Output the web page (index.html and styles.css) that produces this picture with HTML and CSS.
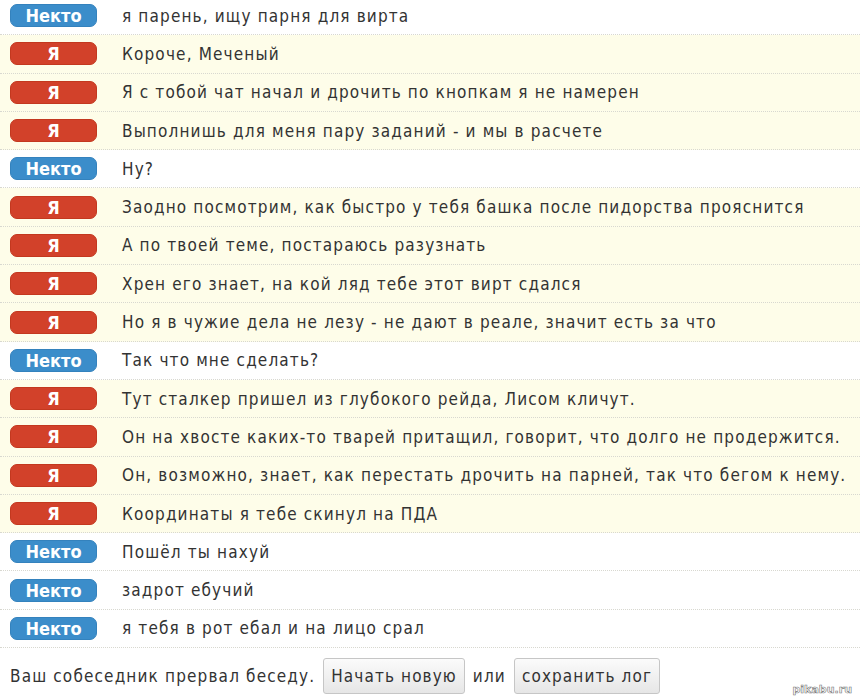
FILE: index.html
```html
<!DOCTYPE html>
<html lang="ru">
<head>
<meta charset="utf-8">
<link rel="stylesheet" href="styles.css">
</head>
<body>
<div class="chat">
  <div class="row stranger"><span class="badge">Некто</span><span class="msg">я парень, ищу парня для вирта</span></div>
  <div class="row me"><span class="badge">Я</span><span class="msg">Короче, Меченый</span></div>
  <div class="row me"><span class="badge">Я</span><span class="msg">Я с тобой чат начал и дрочить по кнопкам я не намерен</span></div>
  <div class="row me"><span class="badge">Я</span><span class="msg">Выполнишь для меня пару заданий - и мы в расчете</span></div>
  <div class="row stranger"><span class="badge">Некто</span><span class="msg">Ну?</span></div>
  <div class="row me"><span class="badge">Я</span><span class="msg">Заодно посмотрим, как быстро у тебя башка после пидорства прояснится</span></div>
  <div class="row me"><span class="badge">Я</span><span class="msg">А по твоей теме, постараюсь разузнать</span></div>
  <div class="row me"><span class="badge">Я</span><span class="msg">Хрен его знает, на кой ляд тебе этот вирт сдался</span></div>
  <div class="row me"><span class="badge">Я</span><span class="msg">Но я в чужие дела не лезу - не дают в реале, значит есть за что</span></div>
  <div class="row stranger"><span class="badge">Некто</span><span class="msg">Так что мне сделать?</span></div>
  <div class="row me"><span class="badge">Я</span><span class="msg">Тут сталкер пришел из глубокого рейда, Лисом кличут.</span></div>
  <div class="row me"><span class="badge">Я</span><span class="msg">Он на хвосте каких-то тварей притащил, говорит, что долго не продержится.</span></div>
  <div class="row me"><span class="badge">Я</span><span class="msg">Он, возможно, знает, как перестать дрочить на парней, так что бегом к нему.</span></div>
  <div class="row me"><span class="badge">Я</span><span class="msg">Координаты я тебе скинул на ПДА</span></div>
  <div class="row stranger"><span class="badge">Некто</span><span class="msg">Пошёл ты нахуй</span></div>
  <div class="row stranger"><span class="badge">Некто</span><span class="msg">задрот ебучий</span></div>
  <div class="row stranger"><span class="badge">Некто</span><span class="msg">я тебя в рот ебал и на лицо срал</span></div>
</div>
<div class="footer">
  <span>Ваш собеседник прервал беседу.</span>
  <button class="btn">Начать новую</button>
  <span>или</span>
  <button class="btn">сохранить лог</button>
</div>
<div class="watermark">pikabu.ru</div>
</body>
</html>
```
FILE: styles.css
```css
html, body {
  margin: 0;
  padding: 0;
  background: #ffffff;
}
body {
  width: 860px;
  height: 699px;
  overflow: hidden;
  position: relative;
  font-family: "DejaVu Sans Condensed", "DejaVu Sans", sans-serif;
  font-size: 17px;
  letter-spacing: 1.15px;
  color: #333333;
}
.chat {
  margin-top: -3px;
}
.row {
  box-sizing: border-box;
  height: 38.3px;
  display: flex;
  align-items: center;
  border-bottom: 1px dotted #d8d8d0;
}
.row.me {
  background: #fefde9;
}
.row.stranger {
  background: #ffffff;
}
.badge {
  box-sizing: border-box;
  width: 87px;
  height: 23px;
  margin-left: 10px;
  margin-right: 25px;
  border-radius: 7px;
  color: #ffffff;
  font-weight: bold;
  font-size: 18px;
  display: flex;
  align-items: center;
  justify-content: center;
  letter-spacing: 0;
}
.me .badge {
  background: #d2412a;
  border: 1px solid #c3381f;
}
.stranger .badge {
  background: #3b8dca;
  border: 1px solid #3482bd;
}
.msg {
  white-space: nowrap;
}
.footer {
  display: flex;
  align-items: center;
  gap: 8px;
  margin-top: 10px;
  padding-left: 10px;
  height: 36px;
}
.btn {
  font-family: inherit;
  font-size: 17px;
  letter-spacing: 1.1px;
  color: #333333;
  height: 36px;
  padding: 0 7px;
  border: 1px solid #c6c6c6;
  border-radius: 3px;
  background: linear-gradient(#fbfbfb, #e6e6e6);
}
.watermark {
  position: absolute;
  right: 8px;
  bottom: 3px;
  font-family: "DejaVu Sans", sans-serif;
  font-size: 11px;
  letter-spacing: 0;
  color: #ffffff;
  -webkit-text-stroke: 0.6px #777;
  font-weight: bold;
}
```
